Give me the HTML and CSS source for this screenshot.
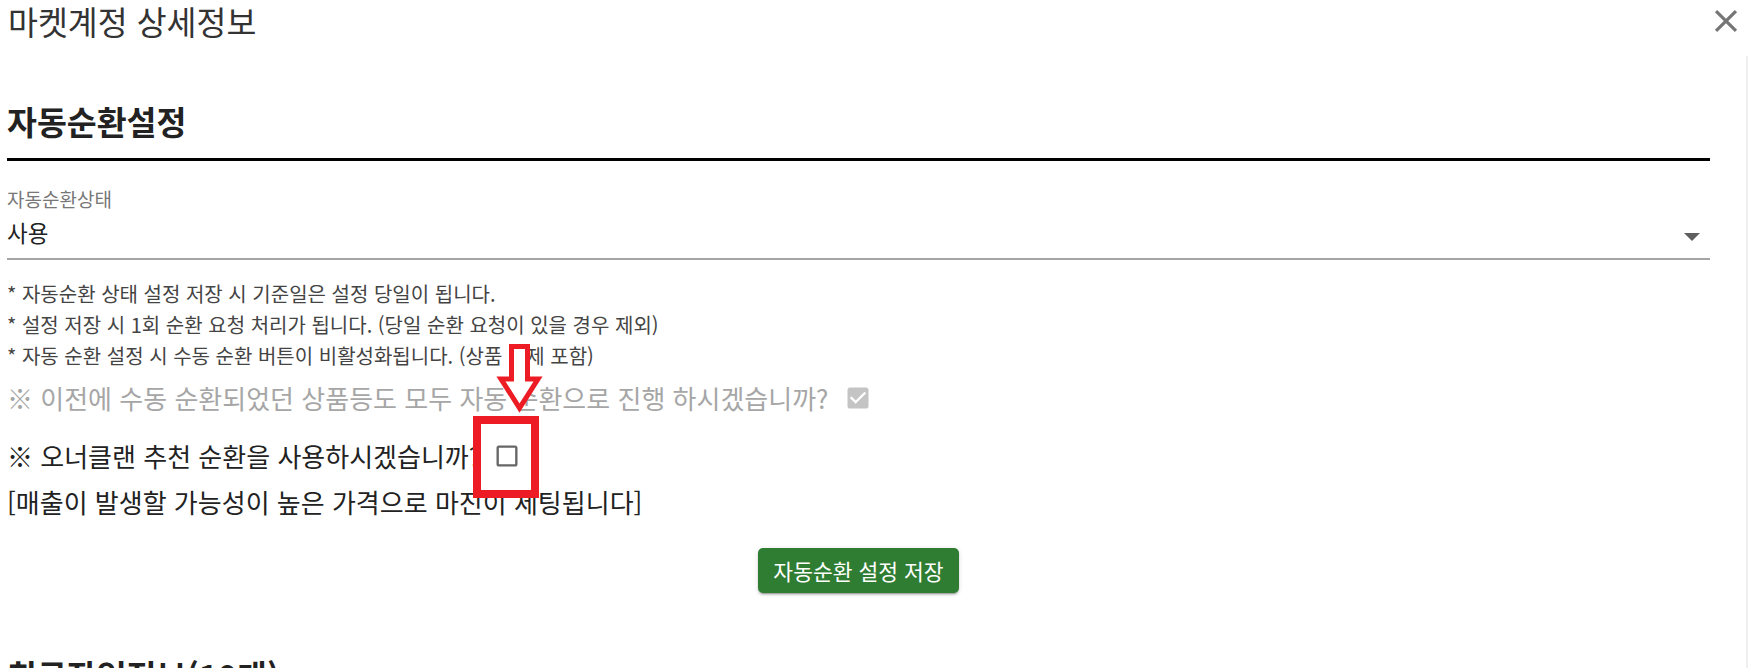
FILE: index.html
```html
<!DOCTYPE html>
<html lang="ko">
<head>
<meta charset="utf-8">
<title>마켓계정 상세정보</title>
<link rel="stylesheet" href="styles.css">
</head>
<body>
<div class="page">
  <header class="dlg-head">
    <h1 class="dlg-title">마켓계정 상세정보</h1>
    <button class="close" aria-label="닫기">
      <svg viewBox="0 0 24 24" width="38" height="38"><path fill="currentColor" d="M19 6.41L17.59 5 12 10.59 6.41 5 5 6.41 10.59 12 5 17.59 6.41 19 12 13.41 17.59 19 19 17.59 13.41 12z"/></svg>
    </button>
  </header>
  <div class="dlg-body">
    <main class="content">
      <section class="sec">
        <h2 class="sec-title">자동순환설정</h2>
        <div class="field">
          <label class="field-label">자동순환상태</label>
          <div class="select">
            <span class="select-value">사용</span>
            <svg class="caret" viewBox="0 0 16 8" width="16" height="8"><polygon points="0,0 16,0 8,8" fill="currentColor"/></svg>
          </div>
        </div>
        <ul class="notes">
          <li>* 자동순환 상태 설정 저장 시 기준일은 설정 당일이 됩니다.</li>
          <li>* 설정 저장 시 1회 순환 요청 처리가 됩니다. (당일 순환 요청이 있을 경우 제외)</li>
          <li>* 자동 순환 설정 시 수동 순환 버튼이 비활성화됩니다. (상품 삭제 포함)</li>
        </ul>
        <div class="q q-disabled">
          <span>※ 이전에 수동 순환되었던 상품등도 모두 자동 순환으로 진행 하시겠습니까?</span>
          <svg class="cb" viewBox="0 0 24 24" width="28" height="28"><path fill="currentColor" d="M19 3H5c-1.11 0-2 .9-2 2v14c0 1.1.89 2 2 2h14c1.1 0 2-.9 2-2V5c0-1.1-.9-2-2-2zm-9 14l-5-5 1.41-1.41L10 14.17l7.59-7.59L19 8l-9 9z"/></svg>
        </div>
        <div class="q q-active">
          <span>※ 오너클랜 추천 순환을 사용하시겠습니까?</span>
          <svg class="cb" viewBox="0 0 24 24" width="28" height="28"><path fill="currentColor" d="M19 5v14H5V5h14m0-2H5c-1.11 0-2 .9-2 2v14c0 1.1.89 2 2 2h14c1.1 0 2-.9 2-2V5c0-1.1-.9-2-2-2z"/></svg>
        </div>
        <p class="q-note">[매출이 발생할 가능성이 높은 가격으로 마진이 세팅됩니다]</p>
        <div class="actions">
          <button class="btn-save">자동순환 설정 저장</button>
        </div>
      </section>
      <h2 class="sec-title sec-next">최근작업정보(10개)</h2>
    </main>
    <div class="track"></div>
  </div>
  <svg class="anno-arrow" viewBox="0 0 49 78" width="49" height="78"><polygon points="16.5,6.5 32.5,6.5 32.5,39 43,39 24.5,68 6,39 16.5,39" fill="#fff" stroke="#ed1c24" stroke-width="5"/></svg>
  <div class="anno-box"></div>
</div>
</body>
</html>
```

FILE: styles.css
```css
* { box-sizing: border-box; }
html, body { margin: 0; padding: 0; height: 100%; overflow: hidden; background: #fff; }
body { font-family: "Noto Sans CJK KR", "Noto Sans", sans-serif; color: #222; }

.page { position: relative; height: 100vh; display: flex; flex-direction: column; overflow: hidden; }

.dlg-head { display: flex; justify-content: space-between; align-items: flex-start; height: 56px; padding: 0 3px 0 8px; flex: none; }
.dlg-title { margin: 0; font-size: 32.5px; font-weight: 400; line-height: 42px; color: #333; }
.close { margin-top: 2px; padding: 0; width: 38px; height: 38px; border: 0; background: none; color: #757575; display: block; }
.close svg { display: block; }

.dlg-body { flex: 1; display: flex; min-height: 0; }
.content { flex: 1; padding: 0 36px 0 7px; overflow: hidden; }
.track { width: 2px; background: #efefef; flex: none; }

.sec-title { margin: 45px 0 0; font-size: 32.5px; font-weight: 700; line-height: 40px; padding: 0 0 17px; border-bottom: 3px solid #000; color: #222; }
.sec-next { margin-top: 62px; border-bottom: 0; }

.field { margin-top: 26px; }
.field-label { display: block; font-size: 19px; line-height: 24px; color: #777; }
.select { margin-top: 7px; display: flex; justify-content: space-between; align-items: center; padding-bottom: 12px; border-bottom: 2px solid #a5a5a5; }
.select-value { font-size: 22.5px; line-height: 28px; color: #222; }
.caret { color: #5f5f5f; margin: 10px 10px 0 0; display: block; }

.notes { list-style: none; margin: 17.5px 0 0; padding: 0; font-size: 20px; line-height: 31px; color: #444; }

.q { display: flex; align-items: center; font-size: 26px; line-height: 34px; }
.q-disabled { margin-top: 10px; color: #a6a6a6; }
.q-disabled .cb { color: #c4c4c4; margin-left: 15.5px; }
.q-active { margin-top: 24px; color: #222; }
.q-active .cb { color: #666; margin-left: 11.5px; }
.cb { display: block; flex: none; }

.q-note { margin: 12px 0 0; font-size: 26px; line-height: 34px; color: #222; }

.actions { margin-top: 29px; display: flex; justify-content: center; }
.btn-save { height: 45px; padding: 0 15px; border: 0; border-radius: 5px; background: #2e7d32; color: #fff; font-family: inherit; font-size: 21.5px; box-shadow: 0 3px 1px -2px rgba(0,0,0,.2), 0 2px 2px 0 rgba(0,0,0,.14), 0 1px 5px 0 rgba(0,0,0,.12); }

.anno-arrow { position: absolute; left: 495px; top: 340px; display: block; }
.anno-box { position: absolute; left: 473px; top: 416px; width: 66px; height: 82px; border: 8px solid #ed1c24; }
```
